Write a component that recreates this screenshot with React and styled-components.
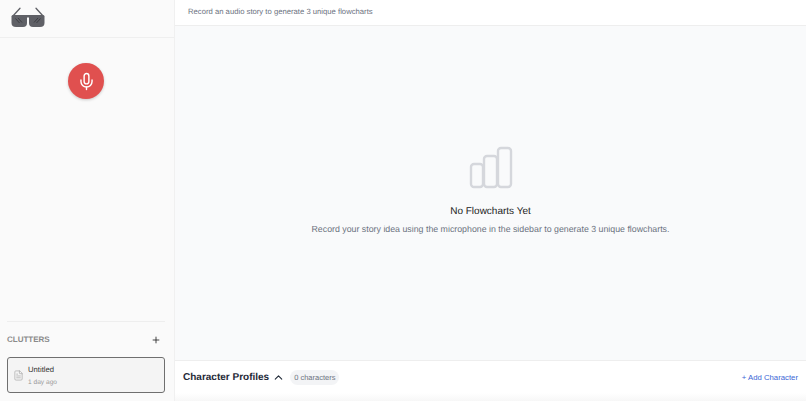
import React from 'react';
import styled, { createGlobalStyle } from 'styled-components';
import { Mic, Plus, ChevronUp, FileText } from 'lucide-react';

const GlobalStyle = createGlobalStyle`
  html, body {
    margin: 0;
    padding: 0;
    height: 100%;
    overflow: hidden;
    font-family: "Liberation Sans", Arial, sans-serif;
    text-rendering: geometricPrecision;
    background: #ffffff;
  }
  #root {
    height: 100%;
  }
`;

const Page = styled.div`
  display: flex;
  width: 806px;
  height: 401px;
  overflow: hidden;
`;

const Sidebar = styled.aside`
  width: 175px;
  box-sizing: border-box;
  flex-shrink: 0;
  display: flex;
  flex-direction: column;
  background: #fafafa;
  border-right: 1px solid #f0f0f0;
`;

const LogoBar = styled.div`
  height: 38px;
  display: flex;
  align-items: flex-start;
  padding: 7px 0 0 11px;
  box-sizing: border-box;
  border-bottom: 1px solid #efefef;
`;

const RecordArea = styled.div`
  flex: 1;
  display: flex;
  justify-content: center;
  padding: 25px 2px 0 0;
`;

const RecordButton = styled.button`
  width: 36px;
  height: 36px;
  padding: 0;
  border: none;
  border-radius: 50%;
  background: #e0504f;
  color: #ffffff;
  display: flex;
  align-items: center;
  justify-content: center;
  box-shadow: 0 1px 3px rgba(0, 0, 0, 0.2);
`;

const ClutterSection = styled.section`
  margin: 0 9px 0 7px;
  padding-top: 10px;
  border-top: 1px solid #eeeeee;
  height: 69px;
`;

const ClutterHeader = styled.div`
  display: flex;
  align-items: center;
  justify-content: space-between;
  height: 16px;
  padding-right: 4px;
  margin-bottom: 9px;
`;

const ClutterTitle = styled.h2`
  margin: 0;
  font-size: 8px;
  line-height: 12px;
  font-weight: 700;
  color: #8a8a8a;
`;

const ClutterCard = styled.div`
  box-sizing: border-box;
  height: 36px;
  display: flex;
  align-items: center;
  gap: 4px;
  padding-left: 5px;
  border: 1px solid #6f6f6f;
  border-radius: 3px;
  background: #f4f4f4;
  color: #a8a8a8;
`;

const ClutterText = styled.div`
  display: flex;
  flex-direction: column;
  gap: 3px;
`;

const ClutterName = styled.span`
  font-size: 7.7px;
  line-height: 11px;
  color: #333333;
`;

const ClutterTime = styled.span`
  font-size: 6.6px;
  line-height: 9px;
  color: #999999;
`;

const Main = styled.main`
  flex: 1;
  min-width: 0;
  display: flex;
  flex-direction: column;
  background: #f9fafb;
`;

const TopBar = styled.header`
  height: 26px;
  display: flex;
  align-items: center;
  padding: 0 13px 3px;
  box-sizing: border-box;
  background: #ffffff;
  border-bottom: 1px solid #eeeeee;
  font-size: 7.7px;
  color: #6b7280;
`;

const EmptyState = styled.div`
  flex: 1;
  display: flex;
  flex-direction: column;
  align-items: center;
  padding-top: 120px;
`;

const EmptyTitle = styled.h3`
  margin: 15px 0 0;
  font-size: 10px;
  line-height: 14px;
  font-weight: 400;
  color: #222222;
`;

const EmptyText = styled.p`
  margin: 4px 0 0;
  font-size: 8.8px;
  line-height: 13px;
  color: #6b7280;
`;

const ProfilesBar = styled.footer`
  height: 41px;
  box-sizing: border-box;
  display: flex;
  align-items: center;
  padding: 0 8px 8px;
  background: linear-gradient(to bottom, #ffffff 32px, #f7f7f7 100%);
  border-top: 1px solid #eeeeee;
`;

const ProfilesTitle = styled.h2`
  margin: 0 3px 0 0;
  font-size: 10px;
  font-weight: 700;
  color: #1f2937;
`;

const CountPill = styled.span`
  margin-left: 5px;
  padding: 0 4px;
  height: 15px;
  line-height: 15px;
  border-radius: 8px;
  background: #f3f4f6;
  font-size: 7.5px;
  color: #6b7280;
`;

const AddButton = styled.button`
  margin-left: auto;
  padding: 0;
  border: none;
  background: none;
  font-family: inherit;
  font-size: 7.75px;
  color: #3b66d6;
`;

function Glasses() {
  return (
    <svg width="34" height="20" viewBox="0 0 34 20" fill="none">
      <path d="M1.5 9.5 L9 1.2 M32.5 9.5 L25 1.2" stroke="#5f6066" strokeWidth="1.3" strokeLinecap="round" />
      <path d="M0.5 9.5 Q0.5 8 2 8 H15 Q16 8 16 9.5 V16 Q16 20 12 20 H5 Q0.5 20 0.5 16 Z" fill="#5f6066" />
      <path d="M18 9.5 Q18 8 19 8 H32 Q33.5 8 33.5 9.5 V16 Q33.5 20 29 20 H22 Q18 20 18 16 Z" fill="#5f6066" />
      <rect x="15" y="8" width="4" height="2.5" fill="#5f6066" />
      <path d="M4.5 11.5 L8.5 16 M7 11 L11 15.5 M29.5 11.5 L25.5 16 M27 11 L23 15.5" stroke="#34353a" strokeWidth="0.8" />
    </svg>
  );
}

function BarsIcon() {
  return (
    <svg width="44" height="44" viewBox="0 0 44 44" fill="none" stroke="#d5d7dc" strokeWidth="2.4">
      <rect x="2" y="18" width="12" height="23" rx="3" />
      <rect x="15" y="10" width="13" height="31" rx="3" />
      <rect x="29" y="2" width="13" height="39" rx="3" />
    </svg>
  );
}

export default function App() {
  return (
    <>
      <GlobalStyle />
      <Page>
        <Sidebar>
          <LogoBar>
            <Glasses />
          </LogoBar>
          <RecordArea>
            <RecordButton>
              <Mic size={19} strokeWidth={1.8} />
            </RecordButton>
          </RecordArea>
          <ClutterSection>
            <ClutterHeader>
              <ClutterTitle>CLUTTERS</ClutterTitle>
              <Plus size={10} color="#222222" strokeWidth={2} />
            </ClutterHeader>
            <ClutterCard>
              <FileText size={11} strokeWidth={1.5} />
              <ClutterText>
                <ClutterName>Untitled</ClutterName>
                <ClutterTime>1 day ago</ClutterTime>
              </ClutterText>
            </ClutterCard>
          </ClutterSection>
        </Sidebar>
        <Main>
          <TopBar>Record an audio story to generate 3 unique flowcharts</TopBar>
          <EmptyState>
            <BarsIcon />
            <EmptyTitle>No Flowcharts Yet</EmptyTitle>
            <EmptyText>
              Record your story idea using the microphone in the sidebar to generate 3 unique flowcharts.
            </EmptyText>
          </EmptyState>
          <ProfilesBar>
            <ProfilesTitle>Character Profiles</ProfilesTitle>
            <ChevronUp size={13} color="#1f2937" strokeWidth={2} />
            <CountPill>0 characters</CountPill>
            <AddButton>+ Add Character</AddButton>
          </ProfilesBar>
        </Main>
      </Page>
    </>
  );
}
